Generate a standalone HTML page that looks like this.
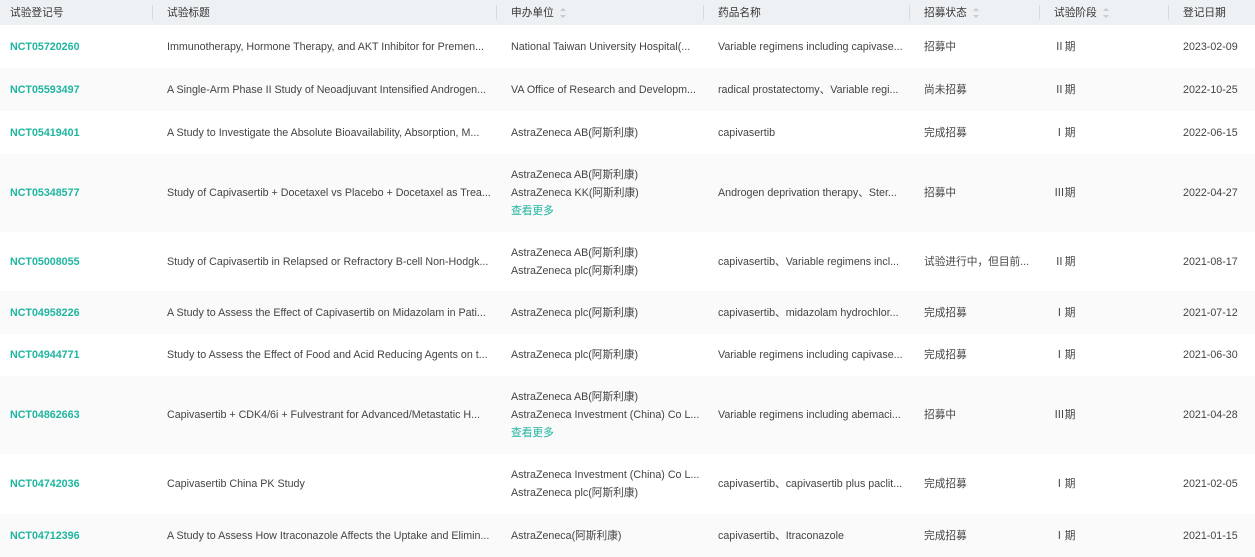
<!DOCTYPE html>
<html><head><meta charset="utf-8"><style>
*{margin:0;padding:0;box-sizing:border-box}
body{width:1255px;height:547px;overflow:hidden;background:#fff;font-family:"Liberation Sans","Noto Sans CJK SC",sans-serif;font-size:10.7px;color:#444}
.r{position:absolute;left:0;width:1255px}
.c{position:absolute;top:50%;transform:translateY(-50%);white-space:nowrap;line-height:18px}
.h{background:#eef1f3;top:0;height:25px;color:#333}
.sep{position:absolute;top:5px;width:1px;height:15px;background:#d8dcdf}
.g{background:#fafafa}
.id{color:#1fb5a0;font-weight:bold}
.m{color:#1fb5a0}
.sort{display:inline-block;margin-left:6px;vertical-align:middle;width:7px;height:10px;position:relative}
.sort:before{content:"";position:absolute;top:0;left:0;border:3.5px solid transparent;border-bottom:3.5px solid #c8cccf;border-top:0}
.sort:after{content:"";position:absolute;bottom:0;left:0;border:3.5px solid transparent;border-top:3.5px solid #c8cccf;border-bottom:0}
</style></head><body>
<div class="r h">
<div class="c" style="left:10px">试验登记号</div><div class="sep" style="left:152px"></div>
<div class="c" style="left:167px">试验标题</div><div class="sep" style="left:496px"></div>
<div class="c" style="left:511px">申办单位<span class="sort"></span></div><div class="sep" style="left:703px"></div>
<div class="c" style="left:718px">药品名称</div><div class="sep" style="left:909px"></div>
<div class="c" style="left:924px">招募状态<span class="sort"></span></div><div class="sep" style="left:1039px"></div>
<div class="c" style="left:1054px">试验阶段<span class="sort"></span></div><div class="sep" style="left:1168px"></div>
<div class="c" style="left:1183px">登记日期</div>
</div>

<div class="r" style="top:25px;height:43px">
<div class="c id" style="left:10px">NCT05720260</div>
<div class="c" style="left:167px">Immunotherapy, Hormone Therapy, and AKT Inhibitor for Premen...</div>
<div class="c" style="left:511px">National Taiwan University Hospital(...</div>
<div class="c" style="left:718px">Variable regimens including capivase...</div>
<div class="c" style="left:924px">招募中</div><div class="c" style="left:1054px">Ⅱ期</div><div class="c" style="left:1183px">2023-02-09</div></div>

<div class="r g" style="top:68px;height:43px">
<div class="c id" style="left:10px">NCT05593497</div>
<div class="c" style="left:167px">A Single-Arm Phase II Study of Neoadjuvant Intensified Androgen...</div>
<div class="c" style="left:511px">VA Office of Research and Developm...</div>
<div class="c" style="left:718px">radical prostatectomy、Variable regi...</div>
<div class="c" style="left:924px">尚未招募</div><div class="c" style="left:1054px">Ⅱ期</div><div class="c" style="left:1183px">2022-10-25</div></div>

<div class="r" style="top:111px;height:43px">
<div class="c id" style="left:10px">NCT05419401</div>
<div class="c" style="left:167px">A Study to Investigate the Absolute Bioavailability, Absorption, M...</div>
<div class="c" style="left:511px">AstraZeneca AB(阿斯利康)</div>
<div class="c" style="left:718px">capivasertib</div>
<div class="c" style="left:924px">完成招募</div><div class="c" style="left:1054px">Ⅰ期</div><div class="c" style="left:1183px">2022-06-15</div></div>

<div class="r g" style="top:154px;height:78px">
<div class="c id" style="left:10px">NCT05348577</div>
<div class="c" style="left:167px">Study of Capivasertib + Docetaxel vs Placebo + Docetaxel as Trea...</div>
<div class="c" style="left:511px">AstraZeneca AB(阿斯利康)<br>AstraZeneca KK(阿斯利康)<br><span class="m">查看更多</span></div>
<div class="c" style="left:718px">Androgen deprivation therapy、Ster...</div>
<div class="c" style="left:924px">招募中</div><div class="c" style="left:1054px">Ⅲ期</div><div class="c" style="left:1183px">2022-04-27</div></div>

<div class="r" style="top:232px;height:59px">
<div class="c id" style="left:10px">NCT05008055</div>
<div class="c" style="left:167px">Study of Capivasertib in Relapsed or Refractory B-cell Non-Hodgk...</div>
<div class="c" style="left:511px">AstraZeneca AB(阿斯利康)<br>AstraZeneca plc(阿斯利康)</div>
<div class="c" style="left:718px">capivasertib、Variable regimens incl...</div>
<div class="c" style="left:924px">试验进行中，但目前...</div><div class="c" style="left:1054px">Ⅱ期</div><div class="c" style="left:1183px">2021-08-17</div></div>

<div class="r g" style="top:291px;height:43px">
<div class="c id" style="left:10px">NCT04958226</div>
<div class="c" style="left:167px">A Study to Assess the Effect of Capivasertib on Midazolam in Pati...</div>
<div class="c" style="left:511px">AstraZeneca plc(阿斯利康)</div>
<div class="c" style="left:718px">capivasertib、midazolam hydrochlor...</div>
<div class="c" style="left:924px">完成招募</div><div class="c" style="left:1054px">Ⅰ期</div><div class="c" style="left:1183px">2021-07-12</div></div>

<div class="r" style="top:334px;height:42px">
<div class="c id" style="left:10px">NCT04944771</div>
<div class="c" style="left:167px">Study to Assess the Effect of Food and Acid Reducing Agents on t...</div>
<div class="c" style="left:511px">AstraZeneca plc(阿斯利康)</div>
<div class="c" style="left:718px">Variable regimens including capivase...</div>
<div class="c" style="left:924px">完成招募</div><div class="c" style="left:1054px">Ⅰ期</div><div class="c" style="left:1183px">2021-06-30</div></div>

<div class="r g" style="top:376px;height:78px">
<div class="c id" style="left:10px">NCT04862663</div>
<div class="c" style="left:167px">Capivasertib + CDK4/6i + Fulvestrant for Advanced/Metastatic H...</div>
<div class="c" style="left:511px">AstraZeneca AB(阿斯利康)<br>AstraZeneca Investment (China) Co L...<br><span class="m">查看更多</span></div>
<div class="c" style="left:718px">Variable regimens including abemaci...</div>
<div class="c" style="left:924px">招募中</div><div class="c" style="left:1054px">Ⅲ期</div><div class="c" style="left:1183px">2021-04-28</div></div>

<div class="r" style="top:454px;height:60px">
<div class="c id" style="left:10px">NCT04742036</div>
<div class="c" style="left:167px">Capivasertib China PK Study</div>
<div class="c" style="left:511px">AstraZeneca Investment (China) Co L...<br>AstraZeneca plc(阿斯利康)</div>
<div class="c" style="left:718px">capivasertib、capivasertib plus paclit...</div>
<div class="c" style="left:924px">完成招募</div><div class="c" style="left:1054px">Ⅰ期</div><div class="c" style="left:1183px">2021-02-05</div></div>

<div class="r g" style="top:514px;height:43px">
<div class="c id" style="left:10px">NCT04712396</div>
<div class="c" style="left:167px">A Study to Assess How Itraconazole Affects the Uptake and Elimin...</div>
<div class="c" style="left:511px">AstraZeneca(阿斯利康)</div>
<div class="c" style="left:718px">capivasertib、Itraconazole</div>
<div class="c" style="left:924px">完成招募</div><div class="c" style="left:1054px">Ⅰ期</div><div class="c" style="left:1183px">2021-01-15</div></div>
</body></html>
